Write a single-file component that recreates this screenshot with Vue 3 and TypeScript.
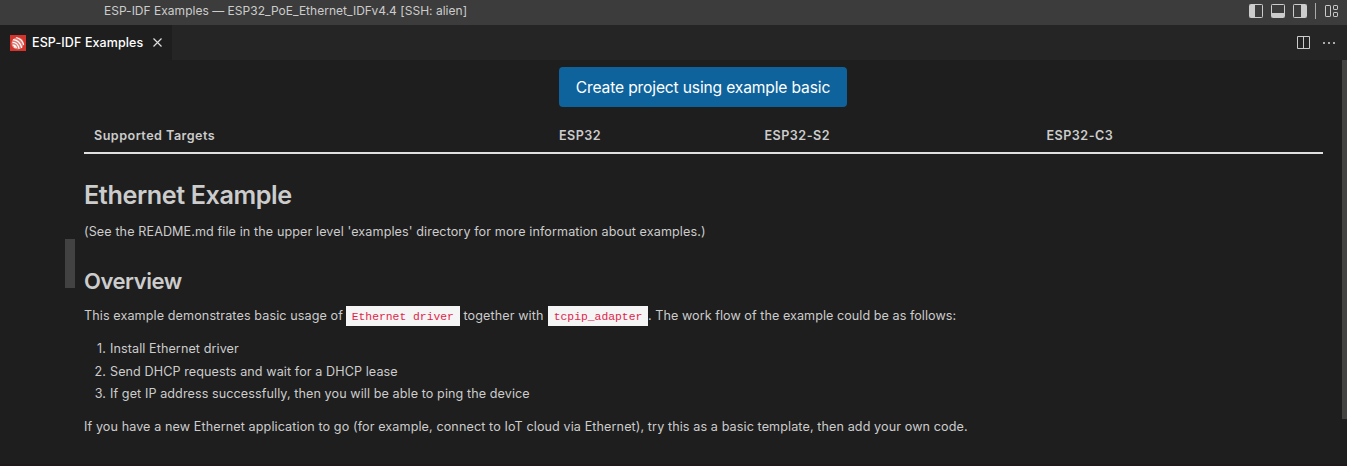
<script setup lang="ts">
const targets: string[] = ['ESP32', 'ESP32-S2', 'ESP32-C3']
const steps: string[] = [
  'Install Ethernet driver',
  'Send DHCP requests and wait for a DHCP lease',
  'If get IP address successfully, then you will be able to ping the device',
]
</script>

<template>
  <div class="window">
    <header class="titlebar">
      <span class="window-title">ESP-IDF Examples — ESP32_PoE_Ethernet_IDFv4.4 [SSH: alien]</span>
      <div class="layout-actions">
        <svg width="14" height="14" viewBox="0 0 14 14"><rect x=".5" y=".5" width="13" height="13" rx=".8" /><path class="solid" d="M1 1h5v12H1z" /></svg>
        <svg width="14" height="14" viewBox="0 0 14 14"><rect x=".5" y=".5" width="13" height="13" rx=".8" /><path class="solid" d="M1 9h12v4H1z" /></svg>
        <svg width="14" height="14" viewBox="0 0 14 14"><rect x=".5" y=".5" width="13" height="13" rx=".8" /><path class="solid" d="M8 1h5v12H8z" /></svg>
        <i class="divider"></i>
        <svg class="customize" width="14" height="13" viewBox="0 0 14 13"><rect x=".5" y=".5" width="5" height="11" rx=".6" /><rect x="8.5" y=".5" width="4" height="4" rx=".6" /><rect x="8.5" y="7.5" width="4" height="4" rx=".6" /></svg>
      </div>
    </header>
    <nav class="tabs">
      <div class="tab">
        <svg class="logo" width="16" height="16" viewBox="0 0 16 16">
          <path class="logo-bg" d="M0 0h16v16H0z" />
          <circle class="logo-disc" cx="7.6" cy="8.4" r="6.2" />
          <path class="logo-wave" d="M3.1 4.6Q9.8 5.1 11.8 13M2.4 7.3Q7.8 7.4 9.1 13.8M6.2 2.5Q12.3 4.2 13.7 9.8M2.7 10.1Q5.8 9.8 6.4 13.1" />
          <circle class="logo-dot" cx="4.7" cy="11.7" r="1" />
        </svg>
        <span class="tab-name">ESP-IDF Examples</span>
        <svg class="close" width="9" height="9" viewBox="0 0 9 9"><path d="M.5.5l8 8M8.5.5l-8 8" /></svg>
      </div>
      <div class="editor-actions">
        <svg width="13" height="13" viewBox="0 0 13 13"><path d="M.5.5h12v12H.5zM6.5.5v12" /></svg>
        <svg class="more" width="12" height="2" viewBox="0 0 12 2"><path class="solid" d="M0 0h2v2H0zM5 0h2v2H5zM10 0h2v2h-2z" /></svg>
      </div>
    </nav>
    <main class="editor">
      <i class="list-scroll"></i>
      <i class="page-scroll"></i>
      <button class="create">Create project using example basic</button>
      <div class="target-row">
        <strong>Supported Targets</strong>
        <strong v-for="target in targets" :key="target">{{ target }}</strong>
      </div>
      <h1>Ethernet Example</h1>
      <p class="see">(See the README.md file in the upper level 'examples' directory for more information about examples.)</p>
      <h2>Overview</h2>
      <p class="intro"><span class="a">This example demonstrates basic usage of</span><code>Ethernet driver</code><span class="b">together with</span><code class="second">tcpip_adapter</code><span class="c">. The work flow of the example could be as follows:</span></p>
      <ol>
        <li v-for="(step, i) in steps" :key="step"><span class="num">{{ i + 1 }}.</span><span>{{ step }}</span></li>
      </ol>
      <p class="closing">If you have a new Ethernet application to go (for example, connect to IoT cloud via Ethernet), try this as a basic template, then add your own code.</p>
    </main>
  </div>
</template>

<style>
body { margin: 0; background: #1e1e1e; overflow: hidden; }
</style>

<style scoped>
.window { position: relative; box-sizing: border-box; width: 1347px; height: 466px; overflow: hidden; background: #1e1e1e; color: #ccc; font: 12.6px/20px Inter, "Liberation Sans", sans-serif; border-bottom: 2px solid #1f191b; }
svg { display: block; fill: none; stroke: #ccc; flex: none; }
.solid { fill: #ccc; stroke: none; }
.titlebar { height: 25px; background: #3c3c3c; display: flex; justify-content: space-between; padding-left: 104px; }
.window-title { font-size: 12px; line-height: 22px; letter-spacing: .02px; white-space: nowrap; }
.layout-actions { display: flex; gap: 8px; padding: 4px 8px 0 0; }
.divider { width: 1px; height: 16px; margin: -1px 1px 0 0; background: #aaa; }
.customize { margin-top: 1px; }
.tabs { height: 35px; background: #252526; display: flex; justify-content: space-between; }
.tab { box-sizing: border-box; width: 172px; background: #1e1e1e; display: flex; align-items: center; padding-left: 10px; }
.logo { stroke: none; }
.logo-bg { fill: #d3342b; }
.logo-disc { fill: #df7f78; }
.logo-wave { fill: none; stroke: #fff; stroke-width: 1.15; }
.logo-dot { fill: #fff; }
.tab-name { margin-left: 6px; width: 112px; color: #fff; white-space: nowrap; font-weight: 500; font-size: 12.5px; letter-spacing: .1px; }
.close { margin-left: 9px; stroke: #ddd; stroke-width: 1.2; }
.editor-actions { display: flex; align-items: center; gap: 13px; padding-right: 12px; }
.more { margin-top: 1px; }
.more .solid { fill: #aaa; }
.editor { position: relative; height: 404px; box-sizing: border-box; padding: 7px 24px 0 84px; }
.list-scroll { position: absolute; left: 65px; top: 179px; width: 10px; height: 49px; background: #424242; }
.page-scroll { position: absolute; right: 0; top: 0; width: 5px; height: 359px; background: #434342; }
.create { display: block; box-sizing: border-box; width: 288px; height: 40px; margin: 0 0 0 475px; padding: 1px 0 0; border: 0; border-radius: 4px; background: #0e639c; color: #fff; font: 15.6px/40px Inter, sans-serif; letter-spacing: -.15px; white-space: nowrap; overflow: hidden; }
.target-row { height: 45px; border-bottom: 2px solid #e0e0e0; display: grid; grid-template-columns: 465px 205.5px 282px 1fr; padding-left: 10px; line-height: 57px; }
.target-row strong { font-weight: 600; letter-spacing: .47px; }
h1, h2, p, ol { margin: 0; font-weight: 400; white-space: nowrap; }
h1 { margin-top: 26px; font-size: 25.2px; line-height: 31px; height: 30px; font-weight: 600; letter-spacing: -.4px; }
p, ol { letter-spacing: .1px; }
.see { margin-top: 11px; height: 20px; line-height: 22px; }
h2 { margin-top: 26px; font-size: 22px; line-height: 29px; height: 28px; font-weight: 600; letter-spacing: -.45px; }
.intro { margin-top: 11px; display: flex; }
.intro span { line-height: 19px; }
.a { width: 262px; }
code { box-sizing: border-box; width: 114px; height: 20px; padding: 0 5.7px; background: #f5f5f5; color: #df1f4c; font: 11.375px/22px "Liberation Mono", monospace; letter-spacing: 0; }
.b { width: 84.5px; padding-left: 3.5px; }
.c { letter-spacing: .05px; }
code.second { width: 100px; }
ol { padding: 0; margin-top: 12px; list-style: none; }
li { display: flex; height: 22.5px; line-height: 21px; letter-spacing: .085px; }
.num { width: 26px; box-sizing: border-box; padding-right: 4px; text-align: right; }
.closing { margin-top: 11.5px; }
</style>
